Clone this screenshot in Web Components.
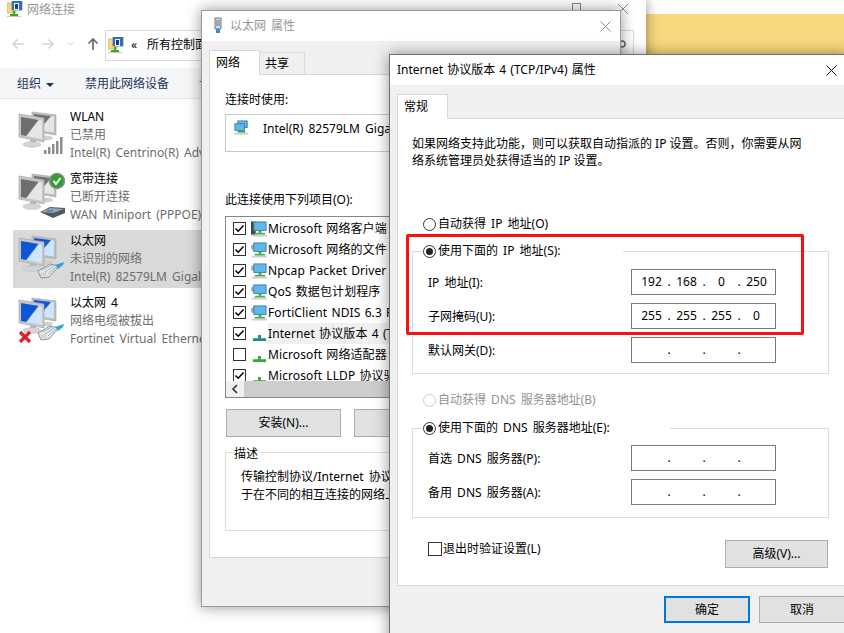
<!DOCTYPE html>
<html lang="zh-CN">
<head>
<meta charset="utf-8">
<title>IPv4</title>
<style>
html, body { margin: 0; padding: 0; background: #fff; }
body { font: 12px/18px "Noto Sans", "Noto Sans CJK SC", sans-serif; color: #000; word-spacing: 2px; }
</style>
</head>
<body>
<desk-top>
  <explorer-window>
    <net-row name="WLAN" detail="已禁用" device="Intel(R) Centrino(R) Adv" tone="gray" badge="bars"></net-row>
    <net-row name="宽带连接" detail="已断开连接" device="WAN Miniport (PPPOE)" tone="gray" badge="modem"></net-row>
    <net-row name="以太网" detail="未识别的网络" device="Intel(R) 82579LM Gigal" tone="blue" badge="cable" selected></net-row>
    <net-row name="以太网 4" detail="网络电缆被拔出" device="Fortinet Virtual Etherne" tone="blue" badge="unplugged"></net-row>
  </explorer-window>

  <props-window>
    <list-row checked kind="client">Microsoft 网络客户端</list-row>
    <list-row checked kind="service">Microsoft 网络的文件</list-row>
    <list-row checked kind="service">Npcap Packet Driver</list-row>
    <list-row checked kind="service">QoS 数据包计划程序</list-row>
    <list-row checked kind="service">FortiClient NDIS 6.3 F</list-row>
    <list-row checked kind="protocol" active>Internet 协议版本 4 (T</list-row>
    <list-row kind="protocol">Microsoft 网络适配器</list-row>
    <list-row checked kind="protocol">Microsoft LLDP 协议驱</list-row>
  </props-window>

  <ipv4-window></ipv4-window>
  <red-mark></red-mark>
</desk-top>

<script>
// 共用图标
const folderIcon = `
<svg width="16" height="16" viewBox="0 0 16 16">
  <path d="M0 2h5l1-1h3v11H0z" fill="#f3d77e" stroke="#c9a94e" stroke-width=".6"/>
  <rect x="5" y="0" width="10" height="9" fill="#2f6fc0" stroke="#5b6c85" stroke-width=".7"/>
  <rect x="7" y="2" width="5" height="7" fill="#eaf2fb"/>
  <rect x="8" y="3" width="3" height="5" fill="#16428c"/>
  <rect x="6" y="10" width="2" height="3" fill="#3caa3c"/>
  <rect x="3" y="13" width="8" height="2" fill="#35a635"/>
  <rect x="0" y="15" width="14" height="1" fill="#c8c8c8"/>
</svg>`;

class DeskTop extends HTMLElement {
  constructor() {
    super();
    this.attachShadow({ mode: "open" });
    this.shadowRoot.innerHTML = `
<style>
:host {
  display: block;
  position: relative;
  width: 844px;
  height: 633px;
  overflow: hidden;
  background: linear-gradient(#fff 14px, #f8d97f 14px);
}
</style>
<slot></slot>`;
  }
}

class ExplorerWindow extends HTMLElement {
  constructor() {
    super();
    this.attachShadow({ mode: "open" });
    this.shadowRoot.innerHTML = `
<style>
:host {
  display: block;
  position: absolute;
  left: 0;
  top: 0;
  width: 646px;
  height: 633px;
  background: #fff;
  box-shadow: 0 0 12px rgba(0, 0, 0, .45);
}
.title { height: 20px; display: flex; align-items: center; gap: 4px; padding-left: 7px; color: #999; }
.title svg { display: block; margin-top: -3px; }
.title span { flex: 1; }
.caps { display: flex; align-items: flex-start; gap: 37px; padding-right: 18px; align-self: flex-start; }
.nav { height: 48px; display: flex; align-items: center; position: relative; }
.arrow { width: 30px; display: flex; justify-content: center; }
.address {
  margin-left: -2px;
  flex: 1;
  margin-right: 12px;
  height: 29px;
  border: 1px solid #d9d9d9;
  display: flex;
  align-items: center;
  gap: 7px;
  padding-left: 2px;
  margin-top: 2px;
}
.address b { font-weight: 400; width: 8px; font-size: 12px; }
.tools {
  background: #f5f6f7;
  border-bottom: 1px solid #e5e5e5;
  display: flex;
  align-items: center;
  color: #1c3558;
  padding: 2px 0 0 17px;
  height: 28px;
}
.caret { width: 0; height: 0; border: 4px solid transparent; border-top: 4px solid #1c3558; border-bottom: 0; margin: 1px 0 0 5px; }
.list { padding: 7px 0 0 13px; display: grid; gap: 4px; }
</style>
<div class="title">
  ${folderIcon}
  <span>网络连接</span>
  <div class="caps">
    <svg width="10" height="10" viewBox="0 0 10 10" style="margin-top:3px"><rect x="1.5" y=".5" width="8" height="8" fill="none" stroke="#888"/></svg>
    <svg width="10" height="10" viewBox="0 0 10 10" style="margin-top:4px"><path d="M0 0l10 10M10 0L0 10" stroke="#888"/></svg>
  </div>
</div>
<div class="nav">
  <div class="arrow" style="margin-left:3px"><svg width="14" height="12" viewBox="0 0 14 12"><path d="M13 6H2M6.5 1.5L2 6l4.500 4.500" fill="none" stroke="#d6d6d6" stroke-width="1.6"/></svg></div>
  <div class="arrow"><svg width="14" height="12" viewBox="0 0 14 12"><path d="M1 6h11M7.500 1.500L12 6l-4.500 4.500" fill="none" stroke="#d6d6d6" stroke-width="1.6"/></svg></div>
  <div class="arrow" style="width:16px"><svg width="8" height="6" viewBox="0 0 8 6"><path d="M1 1l3 3 3-3" fill="none" stroke="#d6d6d6"/></svg></div>
  <div class="arrow" style="width:28px"><svg width="12" height="14" viewBox="0 0 12 14"><path d="M6 13V2M1.500 6.500L6 2l4.500 4.500" fill="none" stroke="#6b6b6b" stroke-width="1.700"/></svg></div>
  <div class="address">
    ${folderIcon}
    <b>«</b>
    <span style="margin-left:1px">所有控制面板项</span>
  </div>
  <svg width="12" height="12" viewBox="0 0 12 12" style="position:absolute;left:617px;top:19px"><circle cx="5" cy="5" r="3" fill="none" stroke="#666" stroke-width="1.500"/></svg>
</div>
<div class="tools">
  <span>组织</span><i class="caret"></i>
  <span style="margin-left:31px">禁用此网络设备</span>
  <span style="margin-left:30px">诊断这个连接</span>
</div>
<div class="list"><slot></slot></div>`;
  }
}

// 大图标：两台显示器加状态角标
const badges = {
  bars: `<g fill="#8d8d8d"><rect x="27" y="41" width="2.500" height="4"/><rect x="31" y="38" width="2.500" height="7"/><rect x="35" y="35" width="2.500" height="10"/><rect x="39" y="32" width="2.500" height="13"/><rect x="43" y="28" width="2.500" height="17"/></g>`,
  modem: `<path d="M23 41l10-5 15 1v5l-12 5z" fill="#50585f"/><path d="M24 41l9-4 14 1-11 4z" fill="#9aa6ae"/><path d="M30 40l6 0" stroke="#3b7fc4" stroke-width="1.500"/>
    <circle cx="40" cy="10" r="7.500" fill="#2f9f2f" stroke="#8c8c8c" stroke-width="1.500"/><path d="M36.500 10l2.500 3 4.500-6" fill="none" stroke="#fff" stroke-width="2"/>`,
  cable: `<path d="M21 38l12-7 9 2-10 11-8 1z" fill="#e4e8ea" stroke="#6f7f88" stroke-width=".8"/>
    <path d="M25 37l10-5M28 39l9-6M31 41l8-7" stroke="#93a4ae" stroke-width=".8"/>
    <path d="M24 40l1 3M26 39.500l1 3.500M28 39l1 3.500" stroke="#c9b56a" stroke-width=".8"/>
    <path d="M38 32l9-3-1 3-5 4z" fill="#35a0dc"/>`
};
badges.unplugged = badges.cable + `<path d="M3 37l10 10M13 37L3 47" stroke="#d8232a" stroke-width="3.200"/>`;

class NetIcon extends HTMLElement {
  constructor() {
    super();
    this.attachShadow({ mode: "open" });
    const blue = this.getAttribute("tone") === "blue";
    const id = Math.random().toString(36).slice(2);
    const c1 = blue ? "#0d56d8" : "#6e6e6e";
    const c2 = blue ? "#cfe5fb" : "#e6e6e6";
    this.shadowRoot.innerHTML = `
<style>
:host { display: block; width: 48px; height: 48px; flex: none; }
svg { display: block; }
</style>
<svg width="48" height="48" viewBox="0 0 48 48">
  <defs><linearGradient id="g${id}" x1="0" y1="0" x2="1" y2=".8"><stop offset="0" stop-color="${c1}"/><stop offset=".55" stop-color="${c1}"/><stop offset=".6" stop-color="${c2}"/><stop offset="1" stop-color="${c2}"/></linearGradient></defs>
  <path d="M15 3l24 3v20l-24-4z" fill="#bdbdbd" stroke="#a9a9a9" stroke-width=".7"/>
  <path d="M17 5l20 2.500v16l-20-3z" fill="url(#g${id})"/>
  <ellipse cx="28" cy="29" rx="8" ry="2.500" fill="#cfcfcf"/>
  <path d="M2 5l25 4v24L2 28z" fill="#c6c6c6" stroke="#a9a9a9" stroke-width=".7"/>
  <path d="M4 8l21 3.500v18.500L4 26z" fill="url(#g${id})"/>
  <path d="M13 31h6v3h-6z" fill="#b5b5b5"/>
  <ellipse cx="15" cy="35.500" rx="9" ry="2.800" fill="#d4d4d4" stroke="#b5b5b5" stroke-width=".5"/>
  ${badges[this.getAttribute("badge")] || ""}
</svg>`;
  }
}

class NetRow extends HTMLElement {
  constructor() {
    super();
    this.attachShadow({ mode: "open" });
    this.shadowRoot.innerHTML = `
<style>
:host {
  display: flex;
  height: 58px;
  width: 200px;
  white-space: nowrap;
}
:host([selected]) { background: #d9d9d9; }
net-icon { margin: 3px 0 0 4px; }
.text { margin-left: 5px; padding-top: 2px; }
.name { color: #000; }
.sub { color: #6d6d6d; }
</style>
<net-icon tone="${this.getAttribute("tone")}" badge="${this.getAttribute("badge")}"></net-icon>
<div class="text">
  <div class="name">${this.getAttribute("name")}</div>
  <div class="sub">${this.getAttribute("detail")}</div>
  <div class="sub">${this.getAttribute("device")}</div>
</div>`;
  }
}

// 对话框外框
class DialogFrame extends HTMLElement {
  constructor() {
    super();
    this.attachShadow({ mode: "open" });
    const inactive = this.hasAttribute("inactive");
    this.shadowRoot.innerHTML = `
<style>
:host {
  display: flex;
  flex-direction: column;
  height: 100%;
  box-sizing: border-box;
  border: 1px solid ${inactive ? "#9a9a9a" : "#707070"};
  background: #f0f0f0;
  box-shadow: 0 0 14px rgba(0, 0, 0, .42);
}
.bar {
  height: 30px;
  flex: none;
  background: #fff;
  display: flex;
  align-items: center;
  gap: 4px;
  padding-left: ${inactive ? "8px" : "7px"};
  color: ${inactive ? "#999" : "#000"};
  word-spacing: var(--bar-word, 2px);
}
.bar span { flex: 1; }
.close { margin-right: var(--close-gap, 9px); }
.tabs { display: flex; align-items: flex-end; height: 33px; flex: none; padding-left: var(--tab-left, 7px); box-sizing: border-box; }
</style>
<div class="bar">
  <slot name="icon"></slot>
  <span>${this.getAttribute("caption")}</span>
  <svg class="close" width="11" height="11" viewBox="0 0 11 11"><path d="M.5.5l10 10M10.500.5l-10 10" stroke="${inactive ? "#8a8a8a" : "#111"}"/></svg>
</div>
<div class="tabs"><slot name="tabs"></slot></div>
<slot></slot>`;
  }
}

class TabItem extends HTMLElement {
  constructor() {
    super();
    this.attachShadow({ mode: "open" });
    this.shadowRoot.innerHTML = `
<style>
:host {
  display: flex;
  align-items: center;
  box-sizing: border-box;
  height: 22px;
  padding: 0 15px 0 5px;
  background: #f0f0f0;
  border: 1px solid #d9d9d9;
  border-bottom: 0;
  margin-left: -1px;
}
:host([active]) {
  height: 25px;
  background: #fff;
  margin-bottom: -1px;
  position: relative;
  z-index: 1;
  padding: 0 19px 1px 6px;
}
</style>
<slot></slot>`;
  }
}

class TabPage extends HTMLElement {
  constructor() {
    super();
    this.attachShadow({ mode: "open" });
    this.shadowRoot.innerHTML = `
<style>
:host {
  display: block;
  box-sizing: border-box;
  background: #fff;
  border: 1px solid #d9d9d9;
  flex: none;
}
</style>
<slot></slot>`;
  }
}

class CheckBox extends HTMLElement {
  constructor() {
    super();
    this.attachShadow({ mode: "open" });
    this.shadowRoot.innerHTML = `
<style>
:host { display: block; flex: none; width: 13px; height: 13px; box-sizing: border-box; border: 1px solid #333; background: #fff; }
svg { display: block; }
</style>
${this.hasAttribute("checked") ? `<svg width="11" height="11" viewBox="0 0 11 11"><path d="M1.500 5.500l2.700 2.700 5.300-5.700" fill="none" stroke="#000" stroke-width="1.500"/></svg>` : ""}`;
  }
}

class RadioOpt extends HTMLElement {
  constructor() {
    super();
    this.attachShadow({ mode: "open" });
    const off = this.hasAttribute("disabled");
    this.shadowRoot.innerHTML = `
<style>
:host { display: flex; align-items: center; height: 18px; white-space: nowrap; color: ${off ? "#6d6d6d" : "#000"}; opacity: ${off ? ".75" : "1"}; }
i { width: 13px; height: 13px; box-sizing: border-box; border: 1px solid ${off ? "#bbb" : "#333"}; border-radius: 50%; margin: 2px 2px 0 0; display: flex; align-items: center; justify-content: center; flex: none; }
b { width: 7px; height: 7px; border-radius: 50%; background: #222; }
span { margin-top: 2px; }
</style>
<i>${this.hasAttribute("checked") ? "<b></b>" : ""}</i><span><slot></slot></span>`;
  }
}

class GroupBox extends HTMLElement {
  constructor() {
    super();
    this.attachShadow({ mode: "open" });
    this.shadowRoot.innerHTML = `
<style>
:host { display: block; box-sizing: border-box; border: 1px solid #dcdcdc; }
.legend { display: block; margin: var(--legend-top, -11px) 0 0 var(--legend-left, 10px); width: var(--legend-width, auto); background: #fff; height: 18px; }
</style>
<div class="legend"><slot name="legend"></slot></div>
<slot></slot>`;
  }
}

class IpField extends HTMLElement {
  constructor() {
    super();
    this.attachShadow({ mode: "open" });
    const parts = (this.getAttribute("value") || "...").split(".");
    const html = parts.map((p, i) => `<span class="seg">${p}</span>${i < 3 ? '<span class="dot">.</span>' : ""}`).join("");
    this.shadowRoot.innerHTML = `
<style>
:host { display: flex; align-items: center; box-sizing: border-box; width: 145px; height: 26px; border: 1px solid #7a7a7a; background: #fff; padding-left: 4px; }
.seg { width: 31px; text-align: center; }
.dot { width: 4px; text-align: center; }
</style>
${html}`;
  }
}

class WinButton extends HTMLElement {
  constructor() {
    super();
    this.attachShadow({ mode: "open" });
    this.shadowRoot.innerHTML = `
<style>
:host {
  display: flex;
  align-items: center;
  justify-content: center;
  box-sizing: border-box;
  flex: none;
  background: #e1e1e1;
  border: 1px solid #adadad;
  height: 28px;
}
:host([primary]) { border: 2px solid #0078d7; }
</style>
<slot></slot>`;
  }
}

// 小图标：网络组件列表
class SmallIcon extends HTMLElement {
  constructor() {
    super();
    this.attachShadow({ mode: "open" });
    const kind = this.getAttribute("kind");
    const monitor = `<rect x="3" y=".5" width="13" height="9" fill="#5fb8ea" stroke="#3f7fa8"/><rect x="8" y="10" width="3" height="2" fill="#3aa63a"/>`;
    const base = `<rect x="4" y="12" width="11" height="2" fill="#4cae4c"/><rect x="1" y="14" width="16" height="2" fill="#cfcfcf"/>`;
    const parts = {
      client: `<rect x="0" y="0" width="5" height="14" fill="#444"/>` + monitor + base,
      service: `<circle cx="3" cy="5" r="3" fill="#a9a9a9"/>` + monitor + base,
      protocol: `<rect x="7.500" y="9" width="3" height="4" fill="#3aa63a"/><rect x="2" y="12.500" width="14" height="3" fill="#3aa63a"/>`,
      tcp: `<rect x="7.500" y="9" width="3" height="4" fill="#1e8a8a"/><rect x="2" y="12.500" width="14" height="3" fill="#1e8a8a"/>`,
      adapter: `<rect x="4" y=".5" width="10" height="7" fill="#5fb8ea" stroke="#3f7fa8"/><rect x="1" y="3.500" width="10" height="7" fill="#5fb8ea" stroke="#3f7fa8"/><rect x="4" y="11" width="8" height="2" fill="#3aa63a"/><rect x="0" y="13" width="15" height="2" fill="#cfcfcf"/>`
    };
    this.shadowRoot.innerHTML = `
<style>
:host { display: block; flex: none; width: 16px; height: 16px; }
svg { display: block; }
</style>
<svg width="16" height="16" viewBox="0 0 17 16">${parts[kind] || ""}</svg>`;
  }
}

class ListRow extends HTMLElement {
  constructor() {
    super();
    this.attachShadow({ mode: "open" });
    const kind = this.hasAttribute("active") ? "tcp" : this.getAttribute("kind");
    const checked = this.hasAttribute("checked") ? "checked" : "";
    this.shadowRoot.innerHTML = `
<style>
:host { display: flex; align-items: center; height: 21px; white-space: nowrap; padding-left: 7px; letter-spacing: .1px; word-spacing: 1px; }
small-icon { margin: 0 1px 0 5px; }
.label { height: 21px; line-height: 21px; flex: 1; }
:host([active]) .label { background: #f0f0f0; }
</style>
<check-box ${checked}></check-box>
<small-icon kind="${kind}"></small-icon>
<div class="label"><slot></slot></div>`;
  }
}

class PropsWindow extends HTMLElement {
  constructor() {
    super();
    this.attachShadow({ mode: "open" });
    this.shadowRoot.innerHTML = `
<style>
:host {
  display: block;
  position: absolute;
  left: 201px;
  top: 10px;
  width: 420px;
  height: 597px;
}
dialog-frame { --tab-left: 8px; --close-gap: 9px; }
.plug { display: block; }
tab-page { margin-left: 7px; width: 405px; height: 484px; padding: 16px 0 0 15px; }
.box {
  box-sizing: border-box;
  margin-top: 5px;
  height: 38px;
  width: 372px;
  border: 1px solid #c8c8c8;
  display: flex;
  align-items: flex-start;
  gap: 13px;
  padding: 5px 0 0 8px;
  white-space: nowrap;
}
.gap { margin-top: 39px; }
.list {
  box-sizing: border-box;
  margin-top: 7px;
  width: 372px;
  height: 182px;
  border: 1px solid #828790;
  display: flex;
  flex-direction: column;
}
.rows { height: 164px; overflow: hidden; padding-top: 1px; box-sizing: border-box; }
.scroll { height: 16px; display: flex; background: #cdcdcd; }
.scroll div { width: 18px; background: #f0f0f0; display: flex; align-items: center; justify-content: center; }
.btns { display: flex; gap: 13px; margin-top: 11px; padding-left: 1px; }
win-button { width: 115px; }
group-box { margin-top: 15px; width: 372px; height: 79px; --legend-left: 8px; --legend-width: 26px; --legend-top: -8px; }
.desc { padding: 5px 0 0 15px; white-space: nowrap; }
</style>
<dialog-frame caption="以太网 属性" inactive>
  <svg class="plug" slot="icon" width="16" height="18" viewBox="0 0 16 18"><path d="M5 1h6v11H5z" fill="#d5dbe0" stroke="#67737c"/><path d="M7 3v6M9 3v6" stroke="#67737c"/><path d="M6 12h4v4H6z" fill="#2f8fd0"/></svg>
  <tab-item slot="tabs" active>网络</tab-item>
  <tab-item slot="tabs">共享</tab-item>
  <tab-page>
    <div>连接时使用:</div>
    <div class="box"><small-icon kind="adapter"></small-icon><span>Intel(R) 82579LM Gigabit</span></div>
    <div class="gap">此连接使用下列项目(O):</div>
    <div class="list">
      <div class="rows"><slot></slot></div>
      <div class="scroll"><div><svg width="8" height="10" viewBox="0 0 8 10"><path d="M6 1L2 5l4 4" fill="none" stroke="#333" stroke-width="1.600"/></svg></div></div>
    </div>
    <div class="btns"><win-button>安装(N)...</win-button><win-button>卸载(U)</win-button></div>
    <group-box>
      <span slot="legend">描述</span>
      <div class="desc">传输控制协议/Internet 协议。<br>于在不同的相互连接的网络上</div>
    </group-box>
  </tab-page>
</dialog-frame>`;
  }
}

class Ipv4Window extends HTMLElement {
  constructor() {
    super();
    this.attachShadow({ mode: "open" });
    this.shadowRoot.innerHTML = `
<style>
:host {
  display: block;
  position: absolute;
  left: 389px;
  top: 54px;
  width: 460px;
  height: 600px;
}
dialog-frame { --tab-left: 8px; --close-gap: 11px; --bar-word: 1px; }
tab-page { margin-left: 7px; width: 460px; height: 468px; padding: 16px 0 0 14px; }
.intro { width: 400px; line-height: 17px; word-spacing: 0; }
.r1, .r2 { margin-left: 11px; }
.r1 { margin-top: 45px; }
.r2 { margin-top: 16px; }
group-box { width: 417px; --legend-left: 10px; }
.g1 { margin-top: 19px; height: 123px; --legend-width: 200px; }
.g2 { margin-top: 20px; height: 90px; --legend-width: 247px; }
.rows { display: grid; grid-template-columns: 203px 145px; gap: 8px 0; padding: 10px 0 0 15px; }
.g2 .rows { padding-top: 9px; }
.rows span { align-self: center; padding-top: 1px; }
.foot { display: flex; align-items: flex-start; margin-top: 22px; width: 416px; }
.foot check-box { margin: 2px 1px 0 16px; width: 14px; height: 14px; }
.foot span { flex: 1; }
.adv { width: 103px; }
.actions { display: flex; gap: 9px; padding: 10px 0 0 274px; }
.actions win-button { width: 86px; height: 27px; }
</style>
<dialog-frame caption="Internet 协议版本 4 (TCP/IPv4) 属性">
  <tab-item slot="tabs" active>常规</tab-item>
  <tab-page>
    <div class="intro">如果网络支持此功能，则可以获取自动指派的 IP 设置。否则，你需要从网络系统管理员处获得适当的 IP 设置。</div>
    <radio-opt class="r1">自动获得 IP 地址(O)</radio-opt>
    <group-box class="g1">
      <radio-opt slot="legend" checked>使用下面的 IP 地址(S):</radio-opt>
      <div class="rows">
        <span>IP 地址(I):</span><ip-field value="192.168.0.250"></ip-field>
        <span>子网掩码(U):</span><ip-field value="255.255.255.0"></ip-field>
        <span>默认网关(D):</span><ip-field></ip-field>
      </div>
    </group-box>
    <radio-opt class="r2" disabled>自动获得 DNS 服务器地址(B)</radio-opt>
    <group-box class="g2">
      <radio-opt slot="legend" checked>使用下面的 DNS 服务器地址(E):</radio-opt>
      <div class="rows">
        <span>首选 DNS 服务器(P):</span><ip-field></ip-field>
        <span>备用 DNS 服务器(A):</span><ip-field></ip-field>
      </div>
    </group-box>
    <div class="foot">
      <check-box></check-box><span>退出时验证设置(L)</span>
      <win-button class="adv">高级(V)...</win-button>
    </div>
  </tab-page>
  <div class="actions">
    <win-button primary>确定</win-button>
    <win-button>取消</win-button>
  </div>
</dialog-frame>`;
  }
}

// 截图上的红色标注框
class RedMark extends HTMLElement {
  constructor() {
    super();
    this.attachShadow({ mode: "open" });
    this.shadowRoot.innerHTML = `
<style>
:host {
  display: block;
  position: absolute;
  left: 406px;
  top: 234px;
  width: 398px;
  height: 101px;
  box-sizing: border-box;
  border: 3px solid #fa1010;
  border-radius: 2px;
}
</style>`;
  }
}

customElements.define("desk-top", DeskTop);
customElements.define("net-icon", NetIcon);
customElements.define("net-row", NetRow);
customElements.define("explorer-window", ExplorerWindow);
customElements.define("dialog-frame", DialogFrame);
customElements.define("tab-item", TabItem);
customElements.define("tab-page", TabPage);
customElements.define("check-box", CheckBox);
customElements.define("radio-opt", RadioOpt);
customElements.define("group-box", GroupBox);
customElements.define("ip-field", IpField);
customElements.define("win-button", WinButton);
customElements.define("small-icon", SmallIcon);
customElements.define("list-row", ListRow);
customElements.define("props-window", PropsWindow);
customElements.define("ipv4-window", Ipv4Window);
customElements.define("red-mark", RedMark);
</script>
</body>
</html>
